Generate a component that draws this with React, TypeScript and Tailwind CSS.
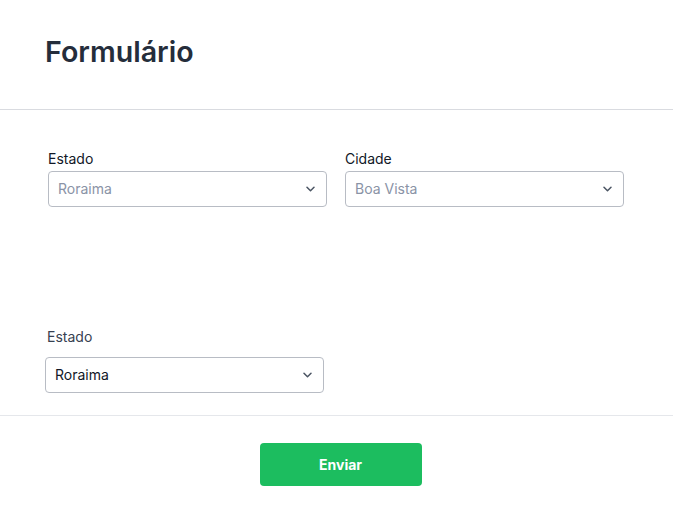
import React from "react";

function Chevron() {
  return (
    <svg width="9" height="6" viewBox="0 0 9 6" fill="none" className="shrink-0">
      <path d="M1 1.2l3.5 3.5 3.5-3.5" stroke="#4b5563" strokeWidth="1.5" strokeLinecap="round" strokeLinejoin="round" />
    </svg>
  );
}

function Select({ value, muted }: { value: string; muted?: boolean }) {
  return (
    <div className="flex h-[36px] w-[279px] items-center justify-between rounded-[4px] border border-[#b8bcc4] bg-white pl-[9px] pr-[11px]">
      <span className={muted ? "text-[14px] leading-[20px] text-[#8a93a6]" : "text-[14px] leading-[20px] text-[#111827]"}>{value}</span>
      <Chevron />
    </div>
  );
}

export default function App() {
  return (
    <div className="min-h-[514px] w-[673px] bg-white" style={{ fontFamily: "Inter, 'Noto Sans', sans-serif" }}>
      <div className="flex h-[110px] items-center border-b border-[#d9dbe0] px-[45px] pb-[4px]">
        <h1 className="text-[28.6px] font-semibold text-[#252d3b]">Formulário</h1>
      </div>
      <div className="flex gap-[18px] px-[48px] pt-[39px]">
        <div className="flex flex-col gap-[2px]">
          <label className="text-[14px] leading-[20px] text-[#111827]">Estado</label>
          <Select value="Roraima" muted />
        </div>
        <div className="flex flex-col gap-[2px]">
          <label className="text-[14px] leading-[20px] text-[#111827]">Cidade</label>
          <Select value="Boa Vista" muted />
        </div>
      </div>
      <div className="flex flex-col gap-[10px] border-b border-[#e5e7eb] px-[45px] pt-[120px] pb-[22px]">
        <label className="pl-[2px] text-[14px] leading-[20px] text-[#374151]">Estado</label>
        <Select value="Roraima" />
      </div>
      <div className="flex justify-center pl-[8px] pt-[27px]">
        <button className="h-[43px] w-[162px] rounded-[4px] bg-[#1cbd5f] text-[14px] font-bold text-white">Enviar</button>
      </div>
    </div>
  );
}
